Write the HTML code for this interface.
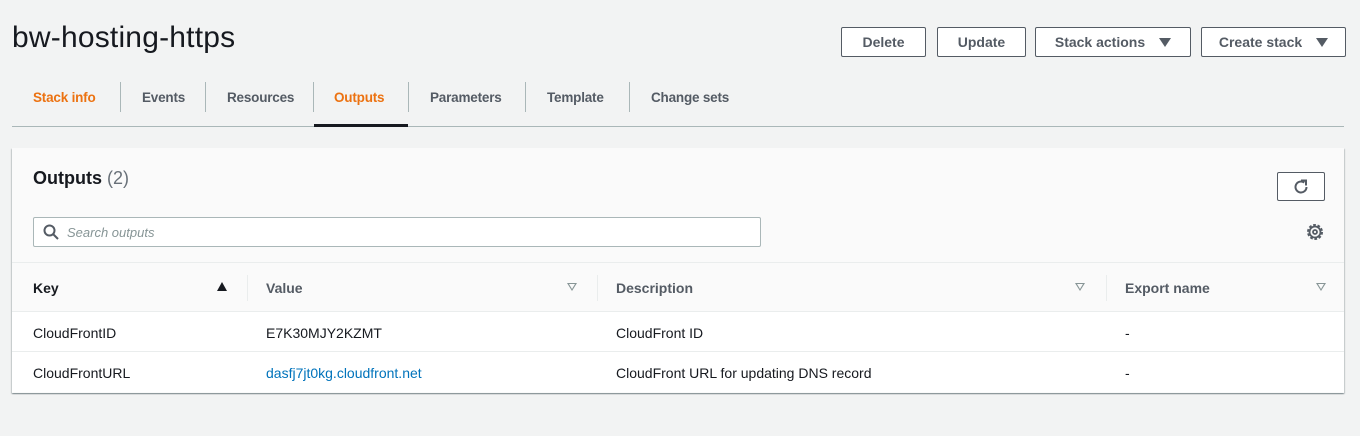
<!DOCTYPE html><html><head><style>
*{box-sizing:border-box;margin:0;padding:0}
body{width:1360px;height:436px;background:#f2f3f3;font-family:"Liberation Sans",sans-serif;color:#16191f;position:relative;overflow:hidden}
.a{position:absolute}
.btn{position:absolute;top:27px;height:30px;border:1px solid #545b64;border-radius:2px;background:#fff;color:#545b64;font-weight:bold;font-size:14px;display:flex;align-items:center;justify-content:center;gap:14px}
.tri{width:0;height:0;border-left:6px solid transparent;border-right:6px solid transparent;border-top:9px solid #545b64}
.tab{position:absolute;top:90px;font-size:13.5px;font-weight:bold;color:#545b64;letter-spacing:-0.2px}
.sep{position:absolute;top:82px;width:1px;height:30px;background:#aab7b8}
.th{position:absolute;top:280px;font-size:14px;font-weight:bold;color:#545b64}
.td{position:absolute;font-size:14px;color:#16191f}
.vs{position:absolute;top:275px;width:1px;height:26px;background:#eaeded}
.dt{position:absolute;top:283px;width:0;height:0;border-left:5px solid transparent;border-right:5px solid transparent;border-top:8px solid #879596}
.dt:after{content:"";position:absolute;left:-3px;top:-7px;border-left:3px solid transparent;border-right:3px solid transparent;border-top:5px solid #fafafa}
</style></head><body>
<div class="a" style="left:12px;top:21px;font-size:30px;letter-spacing:0.2px">bw-hosting-https</div>
<div class="btn" style="left:841px;width:85px">Delete</div>
<div class="btn" style="left:937px;width:89px">Update</div>
<div class="btn" style="left:1035px;width:156px">Stack actions<span class="tri"></span></div>
<div class="btn" style="left:1201px;width:145px">Create stack<span class="tri"></span></div>
<div class="tab" style="left:33px;color:#ec7211">Stack info</div>
<div class="sep" style="left:120px"></div>
<div class="tab" style="left:142px">Events</div>
<div class="sep" style="left:205px"></div>
<div class="tab" style="left:227px">Resources</div>
<div class="sep" style="left:313px"></div>
<div class="tab" style="left:334px;color:#ec7211">Outputs</div>
<div class="sep" style="left:408px"></div>
<div class="tab" style="left:430px">Parameters</div>
<div class="sep" style="left:525px"></div>
<div class="tab" style="left:547px">Template</div>
<div class="sep" style="left:629px"></div>
<div class="tab" style="left:651px">Change sets</div>
<div class="a" style="left:12px;top:126px;width:1332px;height:1px;background:#aab7b8"></div>
<div class="a" style="left:314px;top:124px;width:94px;height:3px;background:#16191f"></div>
<div class="a" style="left:12px;top:148px;width:1332px;height:245px;background:#fafafa;box-shadow:0 1px 1px rgba(0,28,36,.3),1px 1px 1px rgba(0,28,36,.15),-1px 1px 1px rgba(0,28,36,.15)"></div>
<div class="a" style="left:33px;top:168px;font-size:18px;font-weight:bold">Outputs <span style="font-weight:normal;color:#687078">(2)</span></div>
<div class="a" style="left:1277px;top:172px;width:48px;height:29px;border:1px solid #545b64;border-radius:2px;background:#fff"></div>
<svg class="a" style="left:1291px;top:177px" width="20" height="20" viewBox="0 0 20 20"><path d="M15.5 10a5.5 5.5 0 1 1-2.2-4.4" fill="none" stroke="#545b64" stroke-width="2"/><path d="M10 3.5h5v5" fill="none" stroke="#545b64" stroke-width="2"/></svg>
<div class="a" style="left:33px;top:217px;width:728px;height:30px;border:1px solid #aab7b8;border-radius:2px;background:#fff"></div>
<svg class="a" style="left:43px;top:224px" width="16" height="16" viewBox="0 0 16 16"><circle cx="6.5" cy="6.5" r="5" fill="none" stroke="#545b64" stroke-width="2"/><path d="M10 10l5 5" stroke="#545b64" stroke-width="2"/></svg>
<div class="a" style="left:67px;top:225px;font-size:13px;font-style:italic;color:#879596">Search outputs</div>
<svg class="a" style="left:1305px;top:222px" width="20" height="20" viewBox="0 0 20 20"><circle cx="10" cy="10" r="6.5" fill="none" stroke="#545b64" stroke-width="3" stroke-dasharray="2.5 1.6"/><circle cx="10" cy="10" r="5.5" fill="none" stroke="#545b64" stroke-width="1.8"/><circle cx="10" cy="10" r="2" fill="none" stroke="#545b64" stroke-width="1.8"/></svg>
<div class="a" style="left:12px;top:262px;width:1332px;height:1px;background:#eaeded"></div>
<div class="a" style="left:12px;top:311px;width:1332px;height:81px;background:#fff;border-top:1px solid #eaeded"></div>
<div class="a" style="left:12px;top:351px;width:1332px;height:1px;background:#eaeded"></div>
<div class="th" style="left:33px;color:#16191f">Key</div>
<div class="a" style="left:217px;top:282px;border-left:5px solid transparent;border-right:5px solid transparent;border-bottom:9px solid #16191f"></div>
<div class="vs" style="left:247px"></div>
<div class="th" style="left:266px">Value</div>
<div class="dt" style="left:567px"></div>
<div class="vs" style="left:597px"></div>
<div class="th" style="left:616px">Description</div>
<div class="dt" style="left:1075px"></div>
<div class="vs" style="left:1106px"></div>
<div class="th" style="left:1125px">Export name</div>
<div class="dt" style="left:1316px"></div>
<div class="td" style="left:33px;top:325px">CloudFrontID</div>
<div class="td" style="left:266px;top:325px">E7K30MJY2KZMT</div>
<div class="td" style="left:616px;top:325px">CloudFront ID</div>
<div class="td" style="left:1125px;top:325px">-</div>
<div class="td" style="left:33px;top:365px">CloudFrontURL</div>
<div class="td" style="left:266px;top:365px;color:#0073bb">dasfj7jt0kg.cloudfront.net</div>
<div class="td" style="left:616px;top:365px">CloudFront URL for updating DNS record</div>
<div class="td" style="left:1125px;top:365px">-</div>
</body></html>
